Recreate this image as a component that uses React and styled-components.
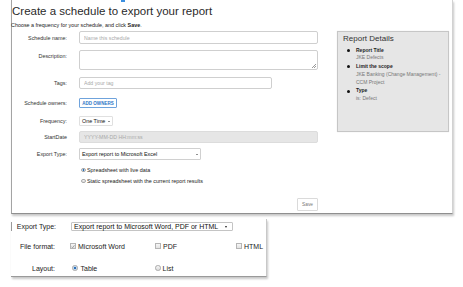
import React from "react";
import styled, { createGlobalStyle } from "styled-components";

const Global = createGlobalStyle`
  html, body { margin: 0; padding: 0; background: #fff; }
  body { font-family: "Liberation Sans", Arial, sans-serif; color: #333; }
  * { box-sizing: border-box; }
`;

const Page = styled.div`
  width: 463px;
  height: 287px;
  overflow: hidden;
  display: flex;
  flex-direction: column;
  padding-left: 11px;
`;

const TopPanel = styled.section`
  position: relative;
  width: 442px;
  height: 214px;
  flex: none;
  border-left: 1px solid #a4a4a4;
  border-right: 1px solid #d2d2d2;
  border-bottom: 1px solid #8f8f8f;
  box-shadow: 1px 2px 2px rgba(0, 0, 0, 0.22);
  display: flex;
  flex-direction: column;
`;

const Mark = styled.span`
  position: absolute;
  left: 109px;
  top: 0;
  width: 4px;
  height: 2px;
  background: #3b8fe0;
`;

const Title = styled.h1`
  margin: 0;
  padding-top: 5px;
  font-size: 11.5px;
  line-height: 13px;
  font-weight: normal;
  color: #2a2a2a;
  white-space: nowrap;
`;

const Intro = styled.p`
  margin: 4px 0 0 -1px;
  font-size: 5.4px;
  line-height: 6px;
  color: #222;
  b { font-weight: bold; }
`;

const Body = styled.div`
  display: flex;
  align-items: flex-start;
  margin-top: 3px;
`;

const Form = styled.div`
  width: 306px;
  display: flex;
  flex-direction: column;
`;

const Row = styled.div`
  display: grid;
  grid-template-columns: 55px 1fr;
  column-gap: 12px;
  align-items: ${(p) => p.$align || "center"};
  justify-items: start;
  margin-top: ${(p) => p.$mt || 0}px;
  height: ${(p) => p.$h}px;
`;

const Label = styled.label`
  justify-self: end;
  text-align: right;
  font-size: 5.4px;
  line-height: 6px;
  color: #333;
  white-space: nowrap;
  padding-top: ${(p) => p.$pt || 0}px;
`;

const TextInput = styled.input`
  width: ${(p) => p.$w || 239}px;
  height: 100%;
  border: 1px solid ${(p) => (p.disabled ? "#dcdcdc" : "#cfcfcf")};
  border-radius: 2px;
  background: ${(p) => (p.disabled ? "#e6e6e6" : "#fff")};
  padding: 0 0 0 4px;
  font-family: inherit;
  font-size: 5.2px;
  color: #333;
  outline: none;
  &::placeholder { color: #a9a9a9; }
`;

const AreaWrap = styled.div`
  position: relative;
  width: 239px;
  height: 20px;
`;

const TextArea = styled.textarea`
  display: block;
  width: 100%;
  height: 100%;
  resize: none;
  border: 1px solid #cfcfcf;
  border-radius: 2px;
  background: #fff;
  font-family: inherit;
  font-size: 5.2px;
  outline: none;
`;

const Grip = styled.span`
  position: absolute;
  right: 2px;
  bottom: 2px;
  width: 4px;
  height: 4px;
  background: linear-gradient(135deg, transparent 0 45%, #999 45% 55%, transparent 55% 72%, #999 72% 82%, transparent 82%);
`;

const OwnerButton = styled.button`
  display: block;
  width: 38px;
  height: 10px;
  padding: 0;
  border: 1px solid #6fa3dc;
  border-radius: 1px;
  background: #fff;
  color: #2f74c6;
  font-family: inherit;
  font-size: 4.5px;
  font-weight: bold;
  letter-spacing: 0.05px;
`;

const Select = styled.div`
  display: flex;
  align-items: center;
  width: ${(p) => p.$w}px;
  height: ${(p) => p.$h || 12}px;
  border: 1px solid ${(p) => p.$border || "#d0d0d0"};
  border-radius: 1px;
  background: #fff;
  padding-left: ${(p) => p.$pl || 2}px;
  font-size: ${(p) => p.$fs || 5.4}px;
  color: #111;
  white-space: nowrap;
`;

const Arrow = styled.span`
  margin-left: auto;
  margin-right: ${(p) => p.$mr || 3}px;
  width: 0;
  height: 0;
  border-left: ${(p) => p.$s || 1.6}px solid transparent;
  border-right: ${(p) => p.$s || 1.6}px solid transparent;
  border-top: ${(p) => (p.$s || 1.6) * 1.3}px solid #222;
`;

const Option = styled.div`
  display: flex;
  align-items: center;
  gap: ${(p) => p.$gap || 1.5}px;
  padding-left: ${(p) => p.$pl || 0}px;
  font-size: ${(p) => p.$fs || 5.4}px;
  color: #222;
  white-space: nowrap;
`;

const Radio = styled.span`
  flex: none;
  width: ${(p) => p.$size}px;
  height: ${(p) => p.$size}px;
  border-radius: 50%;
  border: 0.6px solid #a9a9a9;
  background: ${(p) =>
    p.$checked
      ? "radial-gradient(circle, #2c6fb8 0 38%, #bcd3ea 48%, #eef3f8 100%)"
      : "linear-gradient(#f6f6f6, #dcdcdc)"};
`;

const Check = styled.span`
  flex: none;
  width: 6px;
  height: 6px;
  border: 0.8px solid #b5b5b5;
  background: linear-gradient(#f7f7f7, #e2e2e2);
  display: flex;
  align-items: center;
  justify-content: center;
`;

const Footer = styled.div`
  display: flex;
  justify-content: flex-end;
  margin-top: 13px;
`;

const SaveButton = styled.button`
  width: 21px;
  height: 13px;
  padding: 0;
  border: 1px solid #dadada;
  border-radius: 1px;
  background: #fff;
  color: #777;
  font-family: inherit;
  font-size: 4.8px;
`;

const Details = styled.aside`
  margin-left: 19px;
  width: 112px;
  height: 101px;
  background: #e6e6e6;
  border: 1px solid #c6c6c6;
  box-shadow: 0 0 1px rgba(0, 0, 0, 0.12);
  padding: 2px 0 0 5px;
`;

const DetailsTitle = styled.h2`
  margin: 0;
  font-size: 8px;
  line-height: 9px;
  font-weight: normal;
  color: #333;
`;

const DetailList = styled.ul`
  list-style: none;
  margin: 3.5px 0 0;
  padding: 0;
  display: flex;
  flex-direction: column;
  gap: 1px;
`;

const DetailItem = styled.li`
  display: flex;
  align-items: flex-start;
  font-size: 5px;
  line-height: 7.8px;
`;

const Bullet = styled.span`
  flex: none;
  width: 3px;
  height: 3px;
  margin: 2.3px 6px 0 4px;
  border-radius: 50%;
  background: #111;
`;

const ItemName = styled.div`
  font-weight: bold;
  color: #222;
`;

const ItemValue = styled.div`
  color: #777;
`;

const BottomPanel = styled.section`
  width: 256px;
  height: 58px;
  margin-top: 5px;
  flex: none;
  border-right: 1px solid #c8c8c8;
  border-bottom: 1px solid #9a9a9a;
  box-shadow: 1px 2px 2px rgba(0, 0, 0, 0.22);
  padding-top: 3px;
  display: flex;
  flex-direction: column;
`;

const BottomRow = styled.div`
  display: grid;
  grid-template-columns: 59px ${(p) => p.$cols || "1fr"};
  align-items: center;
  height: ${(p) => p.$h}px;
  margin-top: ${(p) => p.$mt || 0}px;
  border-left: ${(p) => (p.$edge ? "1px solid #9a9a9a" : "none")};
`;

const BottomLabel = styled.span`
  padding-right: 15px;
  text-align: right;
  font-size: 7px;
  color: #222;
  white-space: nowrap;
`;

const Tick = () => (
  <svg width="5" height="5" viewBox="0 0 10 10">
    <polyline points="1.5,5.5 4,8 8.8,1.8" fill="none" stroke="#8a8a8a" strokeWidth="1.8" />
  </svg>
);

export default function App() {
  return (
    <>
      <Global />
      <Page>
        <TopPanel>
          <Mark />
          <Title>Create a schedule to export your report</Title>
          <Intro>
            Choose a frequency for your schedule, and click <b>Save</b>.
          </Intro>
          <Body>
            <Form>
              <Row $h={13}>
                <Label>Schedule name:</Label>
                <TextInput placeholder="Name this schedule" />
              </Row>
              <Row $mt={6} $h={20} $align="start">
                <Label $pt={3}>Description:</Label>
                <AreaWrap>
                  <TextArea />
                  <Grip />
                </AreaWrap>
              </Row>
              <Row $mt={7} $h={12}>
                <Label>Tags:</Label>
                <TextInput $w={193} placeholder="Add your tag" />
              </Row>
              <Row $mt={9} $h={10}>
                <Label>Schedule owners:</Label>
                <OwnerButton>ADD OWNERS</OwnerButton>
              </Row>
              <Row $mt={8} $h={10}>
                <Label>Frequency:</Label>
                <Select $w={34} $h={10} $border="#e0e0e0">
                  One Time
                  <Arrow $mr={2} $s={1.4} />
                </Select>
              </Row>
              <Row $mt={5} $h={12}>
                <Label>StartDate</Label>
                <TextInput disabled placeholder="YYYY-MM-DD HH:mm:ss" />
              </Row>
              <Row $mt={5} $h={12}>
                <Label>Export Type:</Label>
                <Select $w={122} $pl={2}>
                  Export report to Microsoft Excel
                  <Arrow $mr={2} $s={1.3} />
                </Select>
              </Row>
              <Row $mt={6} $h={8}>
                <span />
                <Option $pl={2}>
                  <Radio $size={4.5} $checked />
                  Spreadsheet with live data
                </Option>
              </Row>
              <Row $mt={3} $h={8}>
                <span />
                <Option $pl={2}>
                  <Radio $size={4.5} />
                  Static spreadsheet with the current report results
                </Option>
              </Row>
              <Footer>
                <SaveButton>Save</SaveButton>
              </Footer>
            </Form>
            <Details>
              <DetailsTitle>Report Details</DetailsTitle>
              <DetailList>
                <DetailItem>
                  <Bullet />
                  <div>
                    <ItemName>Report Title</ItemName>
                    <ItemValue>JKE Defects</ItemValue>
                  </div>
                </DetailItem>
                <DetailItem>
                  <Bullet />
                  <div>
                    <ItemName>Limit the scope</ItemName>
                    <ItemValue>JKE Banking (Change Management) -</ItemValue>
                    <ItemValue>CCM Project</ItemValue>
                  </div>
                </DetailItem>
                <DetailItem>
                  <Bullet />
                  <div>
                    <ItemName>Type</ItemName>
                    <ItemValue>is: Defect</ItemValue>
                  </div>
                </DetailItem>
              </DetailList>
            </Details>
          </Body>
        </TopPanel>

        <BottomPanel>
          <BottomRow $h={9} $edge>
            <BottomLabel>Export Type:</BottomLabel>
            <Select $w={162} $h={9} $fs={7} $pl={2} $border="#c4c4c4">
              Export report to Microsoft Word, PDF or HTML
              <Arrow $mr={5} $s={1.6} />
            </Select>
          </BottomRow>
          <BottomRow $mt={10} $h={10} $cols="85px 81px auto">
            <BottomLabel>File format:</BottomLabel>
            <Option $fs={7} $gap={2}>
              <Check>
                <Tick />
              </Check>
              Microsoft Word
            </Option>
            <Option $fs={7} $gap={2}>
              <Check />
              PDF
            </Option>
            <Option $fs={7} $gap={2}>
              <Check />
              HTML
            </Option>
          </BottomRow>
          <BottomRow $mt={12} $h={10} $cols="85px 81px">
            <BottomLabel>Layout:</BottomLabel>
            <Option $fs={7} $gap={3} $pl={2}>
              <Radio $size={5.5} $checked />
              Table
            </Option>
            <Option $fs={7} $gap={2}>
              <Radio $size={5.5} />
              List
            </Option>
          </BottomRow>
        </BottomPanel>
      </Page>
    </>
  );
}
